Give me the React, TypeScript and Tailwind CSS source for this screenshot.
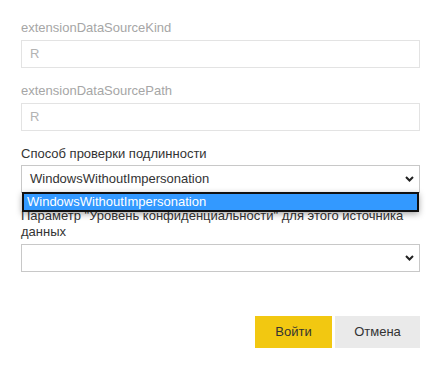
import React from "react";

const Chevron = () => (
  <svg width="9" height="6" viewBox="0 0 9 6" className="shrink-0">
    <path d="M1 1 L4.5 4.5 L8 1" fill="none" stroke="#222" strokeWidth="2" />
  </svg>
);

export default function App() {
  return (
    <div
      className="w-[440px] h-[368px] bg-white relative"
      style={{ fontFamily: '"Liberation Sans", Arial, sans-serif' }}
    >
      <div className="pl-[21px] pr-[20px] pt-[19px]">
        <div className="text-[13px] leading-[18px] text-[#a6a6a6] mb-[3px]">extensionDataSourceKind</div>
        <div className="h-[28px] border border-[#e3e3e3] flex items-center pl-[8px] text-[13px] text-[#b3b3b3] mb-[14px]">R</div>

        <div className="text-[13px] leading-[18px] text-[#a6a6a6] mb-[3px]">extensionDataSourcePath</div>
        <div className="h-[28px] border border-[#e3e3e3] flex items-center pl-[8px] text-[13px] text-[#b3b3b3] mb-[14px]">R</div>

        <div className="text-[13px] leading-[18px] text-[#333333] mb-[2px]">Способ проверки подлинности</div>
        <div className="relative">
          <div className="h-[28px] border border-[#c8c8c8] flex items-center justify-between pl-[8px] pr-[5px] text-[13px] text-[#333333]">
            <span>WindowsWithoutImpersonation</span>
            <Chevron />
          </div>
          <div className="absolute left-[1px] right-[1px] top-[27px] h-[20px] bg-[#3399ff] border-2 border-[#111] text-white text-[13px] leading-[15px] pl-[3px] shadow-[0_2px_6px_rgba(0,0,0,0.35)] z-10">
            WindowsWithoutImpersonation
          </div>
        </div>

        <div className="mt-[15px] text-[13px] leading-[16px] text-[#333333] mb-[4px]">
          Параметр "Уровень конфиденциальности" для этого источника данных
        </div>
        <div className="h-[28px] border border-[#c8c8c8] flex items-center justify-end pr-[5px]">
          <Chevron />
        </div>

        <div className="mt-[44px] flex justify-end gap-[3px]">
          <button className="w-[77px] h-[32px] bg-[#f2c811] text-[13px] text-[#333333]">Войти</button>
          <button className="w-[85px] h-[32px] bg-[#eaeaea] text-[13px] text-[#333333]">Отмена</button>
        </div>
      </div>
    </div>
  );
}
